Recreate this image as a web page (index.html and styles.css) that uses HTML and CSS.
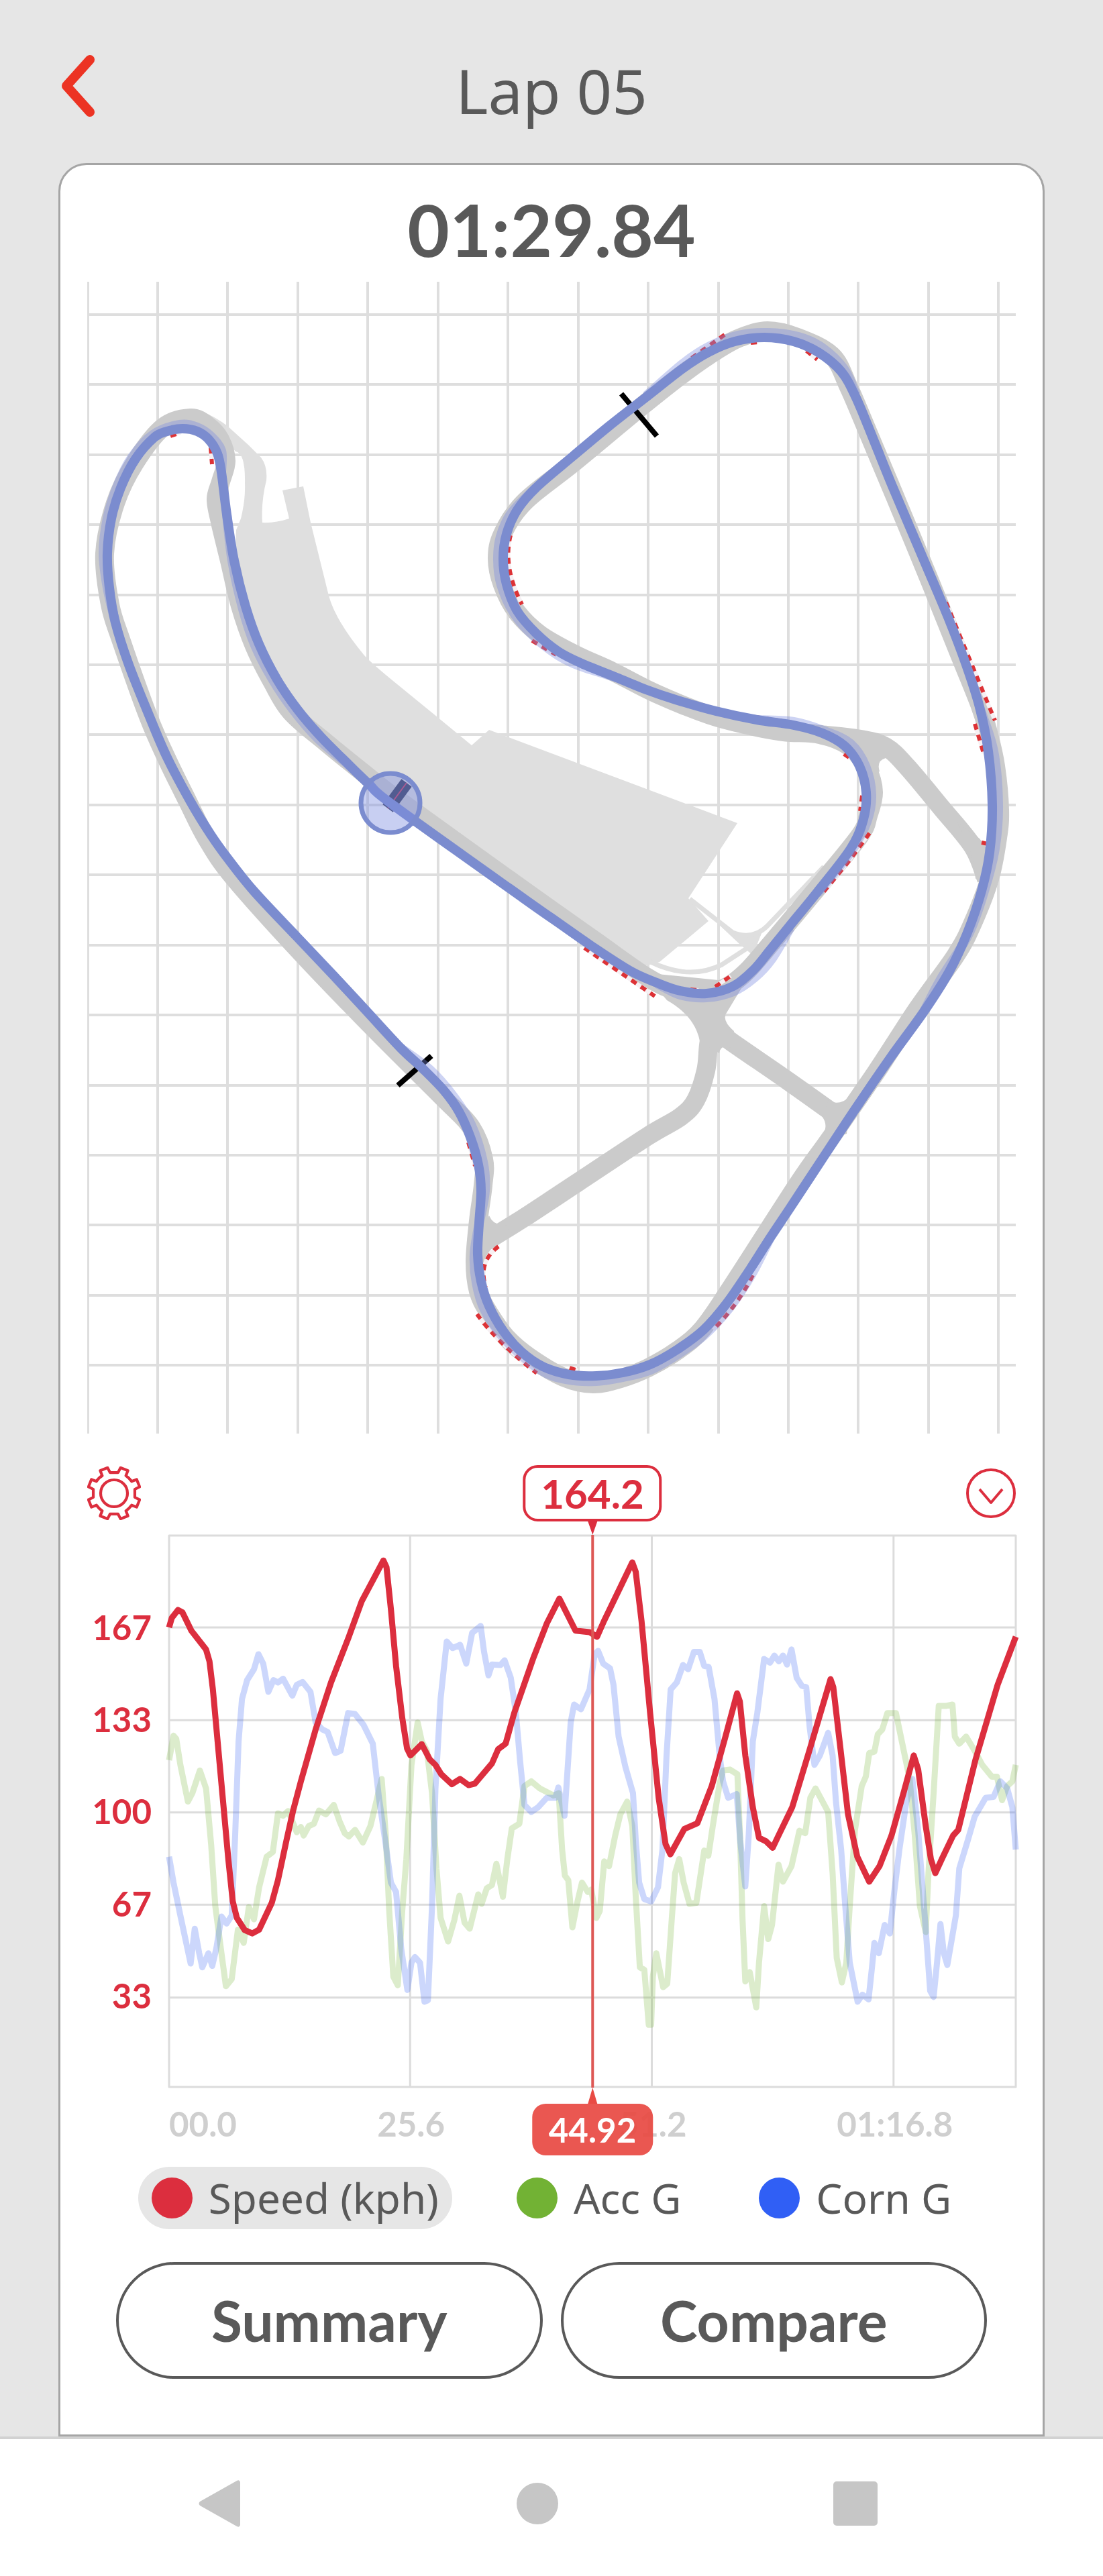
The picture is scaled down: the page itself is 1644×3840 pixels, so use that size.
FILE: index.html
```html
<!DOCTYPE html>
<html lang="en">
<head>
<meta charset="utf-8">
<meta name="viewport" content="width=device-width, initial-scale=1">
<title>Lap 05</title>
<link rel="stylesheet" href="styles.css">
</head>
<body>
<header class="topbar">
  <button class="icon-button back" aria-label="Back">
    <svg width="49" height="92" viewBox="0 0 49 92"><path d="M42 7 7 46 42 85"/></svg>
  </button>
  <h1 class="title">Lap 05</h1>
</header>

<main class="card">
  <p class="lap-time">01:29.84</p>

  <svg class="map" viewBox="130 420 1384 1717" role="img" aria-label="Track map">
    <path class="grid" d="M131 420V2137M235 420V2137M339 420V2137M444 420V2137M548 420V2137M653 420V2137M757 420V2137M862 420V2137M966 420V2137M1071 420V2137M1175 420V2137M1279 420V2137M1384 420V2137M1488 420V2137M130 469H1514M130 573H1514M130 678H1514M130 782H1514M130 887H1514M130 991H1514M130 1095H1514M130 1200H1514M130 1304H1514M130 1409H1514M130 1513H1514M130 1618H1514M130 1722H1514M130 1826H1514M130 1931H1514M130 2035H1514"/>
    <!-- paddock and pit lane -->
    <path class="paddock" d="M299 612Q322 622 339 635L371 664 389 682Q399 695 397 716 389 748 391 779 410 780 431 773L421 731 452 725 463 779 490 888Q500 925 543 977 555 990 592 1020L652 1069 703 1111 729 1088 1099 1227 1026 1339 1056 1373 983 1434 940 1446 786 1337 593 1198 480 1105 400 1000 350 850 352 790 359 773Q366 745 365 721 366 675 351 673L330 650ZM1050 1358 1094 1391Q1118 1398 1138 1384L1122 1424 1102 1407Z"/>
    <path class="pit-road" d="M1028 1340 1092 1390Q1122 1402 1144 1380L1228 1292M970 1434Q1028 1462 1076 1438L1122 1408"/>
    <!-- circuit -->
    <path class="road" data-closed data-points="593,1192 544,1154 486,1107 434,1062 406,1017 379,963 358,903 342,836 328,778 322,744 329,718 337,687 328,655 309,634 284,623 243,637 201,690 172,750 156,825 164,901 181,956 221,1068 249,1132 280,1195 308,1250 349,1309 453,1425 558,1534 662,1638 702,1680 721,1728 720,1767 713,1820 708,1881 713,1925 728,1956 755,1994 789,2023 840,2053 884,2063 925,2055 966,2039 1010,2013 1047,1981 1090,1919 1190,1764 1236,1699 1306,1598 1368,1503 1424,1425 1449,1378 1475,1310 1487,1249 1490,1207 1484,1142 1473,1092 1460,1050 1427,968 1388,871 1338,750 1294,645 1265,577 1240,530 1189,503 1144,493 1104,503 1072,520 1021,555 955,607 856,689 782,748 749,796 741,833 749,872 770,912 805,946 858,976 913,1001 978,1034 1058,1066 1119,1082 1168,1091 1222,1095 1265,1112 1292,1145 1302,1181 1294,1216 1282,1245 1228,1312 1148,1408 1113,1448 1085,1470 1055,1480 1010,1477 965,1457 885,1401 786,1331"/>
    <path class="road" data-points="1222,1095 1283,1102 1320,1113 1352,1143 1403,1204 1450,1262 1470,1310"/>
    <path class="road" data-points="1060,1490 1062,1520 1056,1558 1052,1596 1037,1640 1014,1665 965,1694 862,1762 780,1816 725,1850"/>
    <path class="road" data-points="1060,1530 1090,1553 1174,1611 1254,1668"/>
    <path class="junction" d="M960 1450 994 1491Q1036 1515 1043 1552L1072 1570Q1074 1556 1090 1562L1094 1537Q1074 1520 1084 1508L1110 1465ZM1235 1640Q1250 1650 1268 1634L1262 1690 1220 1704Q1238 1680 1225 1664ZM1270 1100 1345 1125 1320 1130Q1306 1134 1311 1150L1290 1160ZM1425 1225Q1450 1260 1454 1310L1490 1290 1460 1250ZM729 1812Q736 1828 752 1824L765 1842Q735 1850 722 1878L708 1850Z"/>
    <!-- kerbs -->
    <g class="kerb">
      <path id="kerbs" d="M1080 499 1029 535M1119 511 1130 510M1202 523 1218 536M1410 898 1483 1074M1453 1079 1466 1123M1463 1256 1472 1258M761 798Q749 845 778 901M793 955 829 976M1258 1124 1268 1131M1285 1186 1282 1209M1296 1242 1265 1284 1228 1329M1106 1066 1180 1077M254 650 269 645M314 667 316 692M871 1413 976 1485M1029 1475 1041 1476M1066 1471 1089 1455M743 1858Q712 1881 724 1919M711 1959Q740 2000 800 2047M849 2039 861 2043M1122 1901Q1100 1945 1063 1982M698 1703 708 1738"/>
      <use class="kerb-dash" href="#kerbs"/>
    </g>
    <path class="sector" d="M926 587 979 650M593 1618 643 1574"/>
    <path class="finish" d="M606 1167 578 1205"/>
    <path class="finish-core" d="M606 1167 578 1205"/>
    <!-- other laps, then the chosen lap -->
    <g class="ghost">
      <path data-points="963,590 1018,542 1056,517 1100,500 1144,496 1190,502 1225,518 1258,550 1276,589"/>
      <path data-points="1460,1054 1481,1120 1488,1200 1483,1265 1468,1325 1444,1392 1402,1460 1377,1508"/>
      <path data-points="799,727 762,765 746,800 742,835 747,872 766,914 797,950 832,977 865,993 919,1010"/>
      <path data-points="1128,1073 1183,1076 1232,1091 1268,1109 1290,1142 1299,1185 1292,1225 1268,1270 1218,1332"/>
      <path data-points="1178,1383 1150,1430 1125,1457 1093,1478 1053,1487 1014,1483 979,1466"/>
      <path data-points="1148,1845 1120,1900 1087,1950 1050,1990 1010,2019 970,2042 929,2053 889,2059 848,2057 805,2042 752,1996 722,1952 710,1912 707,1870 714,1824"/>
      <path data-points="597,1562 640,1594 674,1632 702,1676 720,1732 723,1775 714,1824"/>
      <path data-points="330,704 330,672 314,650 294,637 268,633 228,648 195,684 174,727 160,773 154,825 160,876 172,928"/>
      <path data-points="338,767 346,836 362,908 380,962 407,1014 437,1058 473,1100 520,1141 550,1169"/>
    </g>
    <path class="lap" data-closed data-points="587,1201 550,1169 520,1140 478,1098 443,1057 413,1013 386,960 366,904 349,836 338,767 330,704 324,676 311,655 294,643 272,639 249,643 230,652 202,684 180,727 166,773 160,825 163,876 172,928 192,991 222,1066 249,1129 284,1195 314,1244 339,1279 379,1329 443,1397 498,1455 548,1509 597,1562 630,1593 662,1626 684,1657 701,1695 713,1736 717,1775 714,1824 712,1870 717,1910 729,1947 750,1984 777,2015 809,2037 848,2049 889,2051 929,2046 969,2034 1009,2012 1049,1982 1083,1943 1118,1892 1148,1845 1178,1800 1228,1724 1277,1650 1327,1577 1377,1508 1415,1448 1442,1390 1463,1328 1475,1271 1479,1200 1473,1120 1460,1054 1440,991 1413,920 1380,842 1331,727 1303,658 1276,593 1254,554 1221,526 1183,509 1139,503 1095,509 1056,525 1018,549 963,592 908,635 854,680 799,727 771,760 755,796 750,833 755,871 771,911 799,944 832,971 867,989 919,1010 963,1028 1007,1043 1067,1060 1128,1073 1183,1081 1226,1093 1259,1112 1281,1142 1291,1181 1287,1221 1268,1265 1218,1330 1178,1379 1148,1416 1123,1446 1093,1470 1053,1481 1014,1477 979,1465 939,1447 880,1409 830,1374 780,1339"/>
    <circle class="position" cx="582" cy="1197" r="44"/>
  </svg>

  <section class="readout" aria-label="Telemetry">
    <div class="toolbar">
      <button class="icon-button" aria-label="Chart settings">
        <svg width="80" height="80" viewBox="2 2 76 76"><path d="M45.7 10.6 49.2 3.8 59.6 8 56.8 15.1Q61 18 64.9 23.2L72 20.4 76.2 30.8 69.4 34.3V45.7L76.2 49.2 72 59.6 64.9 56.8Q61 62 56.8 64.9L59.6 72 49.2 76.2 45.7 69.4H34.3L30.8 76.2 20.4 72 23.2 64.9Q18 61 15.1 56.8L8 59.6 3.8 49.2 10.6 45.7V34.3L3.8 30.8 8 20.4 15.1 23.2Q18 18 23.2 15.1L20.4 8 30.8 3.8 34.3 10.6Z"/><circle cx="40" cy="40" r="19"/></svg>
      </button>
      <button class="icon-button" aria-label="Collapse chart">
        <svg width="74" height="74" viewBox="0 0 74 74"><circle cx="37" cy="37" r="35"/><path d="M20 31 37 51 54 31"/></svg>
      </button>
    </div>
    <div class="chart">
      <div class="y-axis"><span>167</span><span>133</span><span>100</span><span>67</span><span>33</span></div>
      <div class="plot">
        <svg class="series" viewBox="337 213 2473 1171" preserveAspectRatio="none" role="img" aria-label="Speed, acceleration and cornering over the lap">
          <path class="lines" d="M337 213H2810V1384H337ZM337 408H2810M337 605H2810M337 801H2810M337 997H2810M337 1194H2810M1041 213V1384M1747 213V1384M2453 213V1384"/>
          <polyline class="acc" points="337,690 350,638 358,645 370,700 392,778 405,760 427,712 445,750 460,870 472,1000 490,1100 503,1170 520,1155 538,1050 555,1078 570,1002 585,1028 600,960 622,895 640,885 655,803 670,808 685,798 710,843 722,832 730,850 745,830 760,825 775,797 795,805 818,785 835,820 850,845 862,852 880,838 903,865 925,830 940,785 958,730 970,850 980,1010 992,1150 1005,1168 1018,1010 1030,900 1045,700 1063,610 1075,650 1090,670 1105,760 1118,920 1130,1025 1152,1075 1170,1030 1185,978 1200,1035 1215,1048 1240,975 1250,995 1265,962 1280,955 1293,910 1312,980 1325,900 1338,835 1360,825 1375,745 1395,735 1420,750 1460,765 1475,760 1485,880 1493,935 1503,945 1515,1045 1530,990 1543,950 1560,970 1570,965 1585,1025 1595,1010 1608,905 1622,915 1640,850 1655,805 1675,778 1690,830 1700,980 1712,1130 1725,1135 1738,1252 1745,1252 1750,1150 1760,1100 1780,1172 1792,1165 1805,1030 1815,930 1827,900 1840,950 1857,995 1877,993 1890,930 1900,882 1912,893 1925,830 1945,740 1955,712 1975,710 1997,720 2005,860 2012,1030 2020,1160 2033,1140 2052,1215 2060,1120 2075,1000 2087,1070 2098,1040 2117,912 2130,948 2155,915 2178,840 2195,845 2210,770 2225,750 2262,800 2275,930 2287,1110 2302,1162 2315,1120 2325,1000 2340,840 2360,745 2372,725 2382,675 2397,672 2407,635 2420,625 2435,590 2460,590 2480,660 2500,730 2515,850 2530,1000 2547,1055 2555,930 2570,760 2585,575 2605,575 2625,572 2632,640 2645,655 2665,640 2690,670 2712,700 2740,725 2755,725 2770,775 2785,745 2800,735 2810,700"/>
          <polyline class="corn" points="337,895 350,950 370,1020 400,1122 412,1048 425,1100 434,1130 452,1100 463,1127 475,1090 490,1022 505,1037 520,1020 530,850 540,650 550,560 565,520 585,497 598,465 612,485 627,545 642,520 655,525 670,517 697,553 710,530 727,524 750,545 765,610 785,625 800,630 822,675 838,670 860,590 880,592 905,615 932,655 950,770 970,870 985,950 1000,970 1015,1090 1033,1178 1045,1120 1055,1108 1070,1120 1083,1203 1093,1200 1105,1000 1115,750 1130,560 1148,438 1165,452 1187,445 1205,485 1222,420 1247,405 1257,460 1270,510 1280,487 1305,488 1317,478 1335,515 1350,590 1362,690 1375,785 1395,800 1415,790 1440,770 1465,770 1474,748 1492,808 1500,720 1510,610 1520,572 1540,582 1565,540 1580,465 1590,458 1605,485 1625,495 1635,530 1650,640 1670,705 1692,760 1700,860 1710,950 1725,985 1745,990 1765,960 1778,880 1790,680 1802,540 1820,525 1838,488 1853,497 1870,460 1887,460 1900,490 1913,492 1930,560 1945,680 1955,735 1970,770 1995,762 2005,860 2020,958 2030,850 2042,650 2055,590 2075,475 2092,483 2105,468 2118,480 2130,468 2142,487 2155,455 2170,515 2185,532 2198,535 2208,620 2222,700 2238,680 2262,632 2275,680 2285,780 2300,880 2312,1000 2325,1120 2348,1203 2362,1188 2380,1198 2390,1130 2397,1078 2410,1100 2427,1040 2442,1058 2455,970 2470,880 2490,780 2508,730 2525,840 2545,1030 2560,1180 2570,1193 2580,1120 2590,1038 2600,1100 2610,1125 2622,1075 2635,1020 2645,920 2670,860 2690,810 2722,770 2745,768 2765,735 2785,750 2800,790 2810,880"/>
          <polyline class="speed" points="337,408 345,388 363,371 376,376 402,415 445,455 455,480 465,540 480,660 495,780 510,900 523,990 535,1025 558,1051 580,1058 600,1050 637,993 655,945 680,860 700,795 722,735 765,625 810,525 860,432 900,352 963,266 972,280 985,370 1000,490 1018,600 1032,665 1042,680 1075,656 1098,688 1115,700 1132,720 1163,741 1187,730 1212,743 1230,740 1280,697 1298,667 1320,655 1345,590 1400,475 1440,400 1477,347 1524,415 1565,418 1587,428 1607,395 1690,270 1700,290 1717,395 1742,590 1767,770 1787,868 1801,890 1842,836 1880,824 1922,745 1962,640 1996,548 2004,565 2020,680 2042,790 2060,855 2080,862 2100,876 2117,850 2157,790 2207,670 2269,518 2277,535 2297,660 2320,805 2347,895 2382,948 2412,915 2447,850 2482,760 2512,680 2525,710 2547,830 2562,900 2575,930 2594,900 2627,850 2642,838 2692,690 2757,530 2810,428"/>
        </svg>
        <div class="cursor">
          <output class="cursor-value">164.2</output>
          <span class="tip-down"></span>
          <span class="cursor-line"></span>
          <span class="tip-up"></span>
          <output class="cursor-time">44.92</output>
        </div>
      </div>
      <div class="x-axis"><span>00.0</span><span>25.6</span><span>51.2</span><span>01:16.8</span></div>
    </div>
  </section>

  <div class="legend">
    <button class="legend-item selected" aria-pressed="true"><span class="dot dot-speed"></span>Speed (kph)</button>
    <button class="legend-item" aria-pressed="false"><span class="dot dot-acc"></span>Acc G</button>
    <button class="legend-item" aria-pressed="false"><span class="dot dot-corn"></span>Corn G</button>
  </div>

  <div class="actions">
    <button class="action">Summary</button>
    <button class="action">Compare</button>
  </div>
</main>

<nav class="system-nav" aria-label="System">
  <button class="icon-button" aria-label="Back"><svg width="62" height="70" viewBox="0 0 62 70"><path d="M62 3V67Q61 71 57 69L2 38Q-1 35 2 32L57 1Q61-1 62 3Z"/></svg></button>
  <button class="icon-button" aria-label="Home"><svg width="62" height="62" viewBox="0 0 62 62"><circle cx="31" cy="31" r="31"/></svg></button>
  <button class="icon-button" aria-label="Recent apps"><svg width="66" height="66" viewBox="0 0 66 66"><rect width="66" height="66" rx="5"/></svg></button>
</nav>
<script src="script.js"></script>
</body>
</html>
```
FILE: styles.css
```css
* { box-sizing: border-box; }

body {
  margin: 0;
  min-height: 100vh;
  display: flex;
  flex-direction: column;
  background: #e6e6e6;
  color: #595959;
  font-family: Lato, "Noto Sans", sans-serif;
}

button { font: inherit; color: inherit; }

.icon-button {
  display: block;
  padding: 0;
  border: 0;
  background: none;
}
.icon-button svg { display: block; }

.topbar {
  display: grid;
  grid-template-columns: 1fr auto 1fr;
  padding: 75px 92px 48px;
}
.back {
  justify-self: start;
  align-self: start;
  margin-top: 7px;
}
.back path {
  fill: none;
  stroke: #ec3323;
  stroke-width: 14;
  stroke-linecap: round;
  stroke-linejoin: round;
}
.title {
  margin: 0;
  font: 400 92px/120px "Noto Sans", sans-serif;
}

.card {
  flex: 1;
  margin: 0 87px;
  padding: 0 40px 80px;
  border: 3px solid #a5a5a5;
  border-radius: 42px 42px 0 0;
  background: #fff;
}
.lap-time {
  margin: 0;
  padding: 35px 0 19px;
  font-size: 108px;
  font-weight: 700;
  line-height: 120px;
  text-align: center;
}

.map { display: block; width: 100%; height: auto; }
.grid { stroke: #dedede; stroke-width: 4; }
.paddock { fill: #dfdfdf; }
.pit-road { fill: none; stroke: #dfdfdf; stroke-width: 7; }
.road { fill: none; stroke: #cbcbcb; stroke-width: 28; }
.junction { fill: #cbcbcb; }
.kerb { fill: none; stroke: #f6f0f3; stroke-width: 6; }
.kerb-dash { stroke: #dd3236; stroke-dasharray: 9 8; }
.sector { stroke: #000; stroke-width: 8; }
.finish { stroke: #333a58; stroke-width: 19; }
.finish-core { stroke: #c8375c; stroke-width: 2; }
.ghost { fill: none; stroke: #7b8ce0; stroke-width: 14; opacity: .38; }
.lap { fill: none; stroke: #7b8ccf; stroke-width: 14; stroke-linejoin: round; }
.position { fill: #7b8ce0; fill-opacity: .42; stroke: #7b8ccf; stroke-width: 7; }

.toolbar {
  display: flex;
  align-items: center;
  justify-content: space-between;
  height: 84px;
  margin: 47px 0 21px;
}
.toolbar svg {
  fill: none;
  stroke: #dc2e3e;
  stroke-width: 4;
  stroke-linejoin: round;
}

.chart {
  display: grid;
  grid-template-columns: 122px 1fr;
}
.y-axis {
  display: grid;
  grid-auto-rows: 1fr;
  align-items: center;
  padding: 68px 26px 68px 0;
  color: #dc2e3e;
  font-size: 51px;
  font-weight: 700;
  text-align: right;
}
.plot { position: relative; height: 822px; }
.series { display: block; width: 100%; height: 100%; overflow: visible; }
.series * { fill: none; vector-effect: non-scaling-stroke; stroke-linejoin: round; }
.lines { stroke: #dcdcdc; stroke-width: 3; }
.acc { stroke: #72b234; stroke-width: 9; stroke-opacity: .25; }
.corn { stroke: #3361f5; stroke-width: 9; stroke-opacity: .25; }
.speed { stroke: #dc2e3e; stroke-width: 9; }

.x-axis {
  grid-column: 2;
  display: grid;
  grid-template-columns: 1fr 2fr 2fr 2fr;
  padding-top: 25px;
  color: #cfcfcf;
  font-size: 51px;
  font-weight: 700;
  line-height: 60px;
  text-align: center;
}
.x-axis span:first-child { text-align: left; }

/* Scrub cursor, drawn over the plot */
.cursor {
  position: absolute;
  top: -105px;
  bottom: -102px;
  left: 50%;
  display: flex;
  flex-direction: column;
  align-items: center;
  transform: translateX(-50%);
  font-weight: 700;
}
.cursor-value {
  padding: 0 23px;
  border: 4px solid #dc2e3e;
  border-radius: 22px;
  background: #fff;
  color: #dc2e3e;
  font-size: 60px;
  line-height: 76px;
}
.cursor-time {
  padding: 0 25px;
  border-radius: 20px;
  background: #e94b44;
  color: #fff;
  font-size: 51px;
  line-height: 77px;
  opacity: .93;
}
.cursor-line { flex: 1; width: 4px; background: #dd5855; }
.tip-down, .tip-up { border: 7px solid transparent; }
.tip-down { border-top: 20px solid #dc2e3e; border-bottom: 0; }
.tip-up { border-bottom: 24px solid #e94b44; border-top: 0; }

.legend {
  display: flex;
  justify-content: center;
  gap: 76px;
  margin-top: 34px;
}
.legend-item {
  display: flex;
  align-items: center;
  gap: 24px;
  padding: 0 20px;
  border: 0;
  border-radius: 47px;
  background: none;
  font: 400 62px/93px "Noto Sans", sans-serif;
}
.legend-item.selected { background: #e6e6e6; }
.dot { width: 61px; height: 61px; border-radius: 50%; }
.dot-speed { background: #dc2e3e; }
.dot-acc { background: #72b234; }
.dot-corn { background: #305ff5; }

.actions {
  display: grid;
  grid-template-columns: 1fr 1fr;
  gap: 27px;
  margin: 49px 43px 0;
}
.action {
  padding: 0;
  border: 4px solid #595959;
  border-radius: 87px;
  background: #fff;
  font-size: 84px;
  font-weight: 700;
  line-height: 166px;
}

.system-nav {
  display: grid;
  grid-template-columns: 1fr 1fr 1fr;
  align-items: center;
  justify-items: center;
  height: 208px;
  padding: 0 132px 12px 90px;
  border-top: 4px solid #d2d2d2;
  background: #fff;
}
.system-nav svg { fill: #c6c6c6; }
```
FILE: script.js
```js
// Draws each map path as a smooth curve through its recorded positions.
document.querySelectorAll('[data-points]').forEach(function (path) {
  var pts = path.dataset.points.split(' ').map(function (p) {
    return p.split(',').map(Number);
  });
  var closed = 'closed' in path.dataset;
  var n = pts.length;
  function at(i) {
    return closed ? pts[(i + n) % n] : pts[Math.max(0, Math.min(n - 1, i))];
  }
  var d = 'M' + pts[0];
  for (var i = 0; i < (closed ? n : n - 1); i++) {
    var a = at(i - 1), b = at(i), c = at(i + 1), e = at(i + 2);
    d += 'C' + [
      b[0] + (c[0] - a[0]) / 6, b[1] + (c[1] - a[1]) / 6,
      c[0] - (e[0] - b[0]) / 6, c[1] - (e[1] - b[1]) / 6,
      c[0], c[1]
    ];
  }
  path.setAttribute('d', d + (closed ? 'Z' : ''));
});
```
